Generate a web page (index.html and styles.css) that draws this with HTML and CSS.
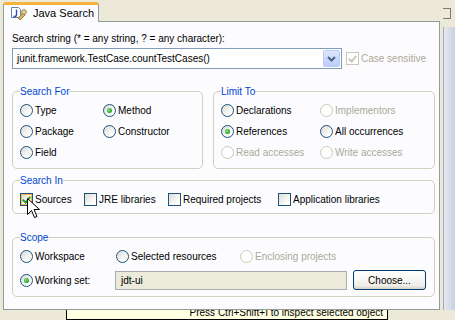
FILE: index.html
```html
<!DOCTYPE html>
<html lang="en">
  <head>
    <meta charset="UTF-8" />
    <title>Java Search</title>
    <link rel="stylesheet" href="styles.css">
  </head>
  <body>
    <div class="screen">
      <div class="window">
        <div class="tabs">
          <div class="tab">
            <svg class="tab-icon" width="17" height="15" viewBox="0 0 17 15">
              <path d="M1.5 1.5h7l2 2v8h-9z" fill="#fff" stroke="#6b7fa8" />
              <path d="M6.5 3.5v5q0 2-2 2h-1" fill="none" stroke="#2a4dbf" stroke-width="1.4" />
              <path d="M8 12l5-5 2 2-5 5z" fill="#d7b370" stroke="#9a7a3a" />
              <circle cx="14" cy="6" r="2.3" fill="#e9d9a6" stroke="#9a7a3a" />
            </svg>
            Java Search
          </div>
        </div>
        <div class="panel">
          <div class="caption">Search string (* = any string, ? = any character):</div>
          <div class="search-row">
            <div class="combo">
              <span class="combo-text">junit.framework.TestCase.countTestCases()</span>
              <span class="combo-btn">
                <svg width="9" height="6" viewBox="0 0 9 6"><path d="M1 1l3.5 3.5L8 1" fill="none" stroke="#4d6185" stroke-width="2" /></svg>
              </span>
            </div>
            <div class="option disabled"><span class="check checked"></span>Case sensitive</div>
          </div>

          <div class="pair">
            <fieldset class="group">
              <legend>Search For</legend>
              <div class="grid for-grid">
                <div class="option"><span class="radio"></span>Type</div>
                <div class="option"><span class="radio on"></span>Method</div>
                <div class="option"><span class="radio"></span>Package</div>
                <div class="option"><span class="radio"></span>Constructor</div>
                <div class="option"><span class="radio"></span>Field</div>
              </div>
            </fieldset>
            <fieldset class="group">
              <legend>Limit To</legend>
              <div class="grid limit-grid">
                <div class="option"><span class="radio"></span>Declarations</div>
                <div class="option disabled"><span class="radio"></span>Implementors</div>
                <div class="option"><span class="radio on"></span>References</div>
                <div class="option"><span class="radio"></span>All occurrences</div>
                <div class="option disabled"><span class="radio"></span>Read accesses</div>
                <div class="option disabled"><span class="radio"></span>Write accesses</div>
              </div>
            </fieldset>
          </div>

          <fieldset class="group search-in">
            <legend>Search In</legend>
            <div class="grid in-grid">
              <div class="option pointed">
                <span class="check checked hover"></span>Sources
                <svg class="cursor" width="13" height="21" viewBox="0 0 13 21">
                  <path d="M0.5 0.5v16l4-4 3 7 2.5-1-3-7h5.5z" fill="#fff" stroke="#000" />
                </svg>
              </div>
              <div class="option"><span class="check"></span>JRE libraries</div>
              <div class="option"><span class="check"></span>Required projects</div>
              <div class="option"><span class="check"></span>Application libraries</div>
            </div>
          </fieldset>

          <fieldset class="group scope">
            <legend>Scope</legend>
            <div class="grid scope-grid">
              <div class="option"><span class="radio"></span>Workspace</div>
              <div class="option"><span class="radio"></span>Selected resources</div>
              <div class="option disabled"><span class="radio"></span>Enclosing projects</div>
            </div>
            <div class="set-row">
              <div class="option set-label"><span class="radio on"></span>Working set:</div>
              <div class="field">jdt-ui</div>
              <div class="button">Choose...</div>
            </div>
          </fieldset>
        </div>
      </div>
      <div class="side">
        <div class="side-tab"></div>
        <div class="side-bar"></div>
      </div>
    </div>
    <div class="bottom">
      <div class="tip"><span>Press Ctrl+Shift+I to inspect selected object</span></div>
    </div>
  </body>
</html>
```

FILE: styles.css
```css
body {
  margin: 0;
  width: 455px;
  height: 320px;
  overflow: hidden;
  background: #ece9d8;
  font-family: 'Liberation Sans', Arial, sans-serif;
  font-size: 10px;
  line-height: 13px;
  color: #000;
}
.screen {
  display: flex;
  height: 310px;
}
.window {
  width: 437px;
  margin-left: 3px;
  display: flex;
  flex-direction: column;
}
.tabs {
  display: flex;
  height: 22px;
  padding-top: 2px;
  box-sizing: border-box;
}
.tabs::after {
  content: '';
  flex: 1;
  border-bottom: 1px solid #919b9c;
}
.tab {
  width: 96px;
  display: flex;
  align-items: center;
  gap: 6px;
  padding-left: 6px;
  box-sizing: border-box;
  background: #fcfcfe;
  border: 1px solid #919b9c;
  border-top: 3px solid #f7b33d;
  border-bottom: none;
  border-radius: 3px 3px 0 0;
  font-size: 11px;
  white-space: nowrap;
}
.tab-icon {
  flex: none;
}
.panel {
  flex: 1;
  background: #fcfcfe;
  border: 1px solid #919b9c;
  border-top: none;
  padding: 10px 4px 0 8px;
}
.caption {
  height: 13px;
}
.search-row {
  display: flex;
  align-items: center;
  margin-top: 3px;
}
.combo {
  width: 330px;
  height: 21px;
  box-sizing: border-box;
  border: 1px solid #7f9db9;
  background: #fff;
  display: flex;
  align-items: center;
  padding: 1px 1px 1px 4px;
  margin-right: 4px;
}
.combo-text {
  flex: 1;
}
.combo-btn {
  width: 17px;
  height: 17px;
  box-sizing: border-box;
  border: 1px solid #b8cbf3;
  border-radius: 2px;
  background: linear-gradient(#dce6fd, #bccdf9);
  display: flex;
  align-items: center;
  justify-content: center;
}
.option {
  display: flex;
  align-items: center;
  height: 21px;
  white-space: nowrap;
}
.option.disabled {
  color: #aca899;
}
.radio,
.check {
  flex: none;
  width: 13px;
  height: 13px;
  box-sizing: border-box;
  margin-right: 2px;
  border: 1px solid #1c5180;
  background: linear-gradient(135deg, #dcdbd3, #fff 80%);
  position: relative;
}
.radio {
  border-radius: 50%;
}
.radio.on::after {
  content: '';
  position: absolute;
  left: 3px;
  top: 3px;
  width: 5px;
  height: 5px;
  border-radius: 50%;
  background: radial-gradient(circle at 40% 40%, #8ee08e, #21a121 70%);
}
.check.checked::after {
  content: '';
  position: absolute;
  left: 3px;
  top: 1px;
  width: 3px;
  height: 6px;
  border: solid #21a121;
  border-width: 0 2px 2px 0;
  transform: rotate(40deg);
}
.check.hover {
  box-shadow: inset 0 0 0 1px #f8b636;
}
.disabled .radio,
.disabled .check {
  border-color: #cac8bb;
  background: #fff;
}
.disabled .check.checked::after {
  border-color: #cac8bb;
}
.pair {
  display: grid;
  grid-template-columns: 191px 222px;
  gap: 10px;
  margin-top: 16px;
}
.group {
  margin: 0;
  padding: 0 7px 5px 7px;
  border: 1px solid #d0d0bf;
  border-radius: 5px;
  min-width: 0;
}
.group legend {
  padding: 0;
  color: #0046d5;
  line-height: 13px;
}
.grid {
  display: grid;
  margin-top: 2px;
}
.for-grid {
  grid-template-columns: 83px auto;
}
.limit-grid {
  grid-template-columns: 99px auto;
}
.search-in {
  margin-top: 5px;
  padding-bottom: 3px;
}
.in-grid {
  grid-template-columns: 64px 84px 110px auto;
}
.pointed {
  position: relative;
}
.cursor {
  position: absolute;
  left: 7px;
  top: 9px;
}
.scope {
  margin-top: 17px;
}
.scope-grid {
  grid-template-columns: 96px 124px auto;
}
.set-row {
  display: flex;
  align-items: center;
  height: 22px;
  margin-top: 2px;
}
.set-label {
  width: 95px;
}
.field {
  width: 232px;
  height: 19px;
  box-sizing: border-box;
  border: 1px solid #a5acb2;
  background: #ebeadb;
  padding-left: 5px;
  display: flex;
  align-items: center;
}
.button {
  width: 73px;
  height: 20px;
  margin-left: 6px;
  box-sizing: border-box;
  border: 1px solid #003c74;
  border-radius: 3px;
  background: linear-gradient(#fff, #f0f0ea 80%, #d6d0c5);
  display: flex;
  align-items: center;
  justify-content: center;
}
.side {
  flex: 1;
  display: flex;
  flex-direction: column;
  padding-left: 3px;
}
.side-tab {
  height: 9px;
  margin: 8px 4px 8px 0;
  border: 1px solid #7a7a70;
  border-left: none;
}
.side-bar {
  flex: 1;
  border-left: 1px solid #a0a8b8;
  background: linear-gradient(90deg, #e4e8f0, #c9d2e2);
}
.bottom {
  display: flex;
  height: 10px;
  padding-left: 66px;
}
.tip {
  width: 322px;
  height: 10px;
  box-sizing: border-box;
  background: #ffffe1;
  border: 1px solid #000;
  border-top: none;
  overflow: hidden;
  text-align: right;
  padding-right: 4px;
}
.tip span {
  display: block;
  margin-top: -4px;
  font-size: 10px;
  line-height: 13px;
}
```
